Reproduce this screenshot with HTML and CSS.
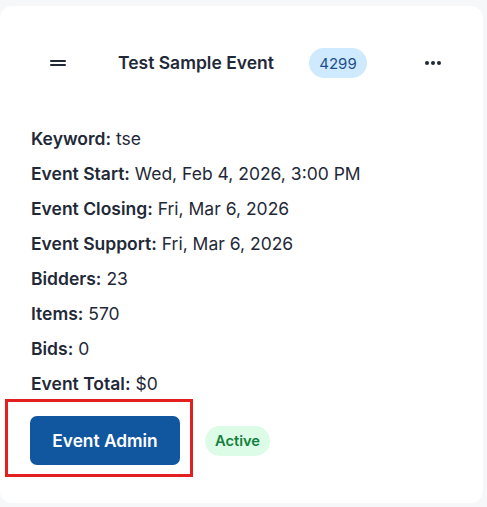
FILE: index.html
```html
<!DOCTYPE html>
<html lang="en">
<head>
<meta charset="utf-8">
<title>Event Card</title>
<link rel="stylesheet" href="styles.css">
</head>
<body>
<div class="card">
  <div class="header">
    <span class="menu-icon" aria-hidden="true"><i></i><i></i></span>
    <h2 class="title">Test Sample Event</h2>
    <span class="id-badge">4299</span>
    <span class="dots" aria-hidden="true"><i></i><i></i><i></i></span>
  </div>
  <ul class="info">
    <li><b>Keyword:</b> tse</li>
    <li><b>Event Start:</b> Wed, Feb 4, 2026, 3:00 PM</li>
    <li><b>Event Closing:</b> Fri, Mar 6, 2026</li>
    <li><b>Event Support:</b> Fri, Mar 6, 2026</li>
    <li><b>Bidders:</b> 23</li>
    <li><b>Items:</b> 570</li>
    <li><b>Bids:</b> 0</li>
    <li><b>Event Total:</b> $0</li>
  </ul>
  <div class="actions">
    <button class="admin-btn">Event Admin</button>
    <span class="status">Active</span>
  </div>
  <div class="highlight"></div>
</div>
</body>
</html>
```
FILE: styles.css
```css
* { box-sizing: border-box; }
html, body { margin: 0; padding: 0; }
body {
  background: #f6f7f9;
  font-family: Inter, "Noto Sans", sans-serif;
  color: #1f2937;
  width: 487px;
  height: 507px;
  overflow: hidden;
}
.card {
  position: relative;
  margin: 6px 4px 0 0;
  width: 483px;
  height: 497px;
  background: #ffffff;
  border-radius: 12px;
  padding: 42px 0 0 0;
}
.header {
  display: flex;
  align-items: center;
  height: 30px;
  padding-left: 50px;
}
.menu-icon {
  display: flex;
  flex-direction: column;
  gap: 2px;
  width: 16px;
}
.menu-icon i {
  display: block;
  height: 2px;
  background: #1f2937;
  border-radius: 1px;
}
.title {
  margin: 0 0 0 52px;
  font-size: 17.5px;
  font-weight: 600;
  line-height: 22px;
  color: #1f2937;
  width: 155px;
  white-space: nowrap;
}
.id-badge {
  margin-left: 36px;
  width: 58px;
  height: 30px;
  border-radius: 15px;
  background: #cfe9fe;
  color: #1d4f8c;
  font-size: 15px;
  display: flex;
  align-items: center;
  justify-content: center;
}
.dots {
  margin-left: 58px;
  display: flex;
  gap: 2px;
  align-items: center;
}
.dots i {
  display: block;
  width: 4px;
  height: 4px;
  border-radius: 50%;
  background: #1f2937;
}
.info {
  list-style: none;
  margin: 49px 0 0 0;
  padding: 0 0 0 31px;
  display: flex;
  flex-direction: column;
  gap: 11px;
}
.info li {
  font-size: 17.5px;
  line-height: 24px;
  white-space: nowrap;
}
.info b { font-weight: 600; }
.actions {
  display: flex;
  align-items: center;
  gap: 25px;
  margin-top: 20px;
  padding-left: 30px;
}
.admin-btn {
  width: 150px;
  height: 49px;
  border: none;
  border-radius: 7px;
  background: #11579f;
  color: #ffffff;
  font-family: Inter, "Noto Sans", sans-serif;
  font-size: 17.3px;
  font-weight: 600;
}
.status {
  width: 65px;
  height: 30px;
  border-radius: 15px;
  background: #dcfce7;
  color: #15803d;
  font-size: 14.7px;
  font-weight: 600;
  display: flex;
  align-items: center;
  justify-content: center;
}
.highlight {
  position: absolute;
  left: 5px;
  top: 393px;
  width: 188px;
  height: 78px;
  border: 3px solid #e3201f;
  pointer-events: none;
}
```
